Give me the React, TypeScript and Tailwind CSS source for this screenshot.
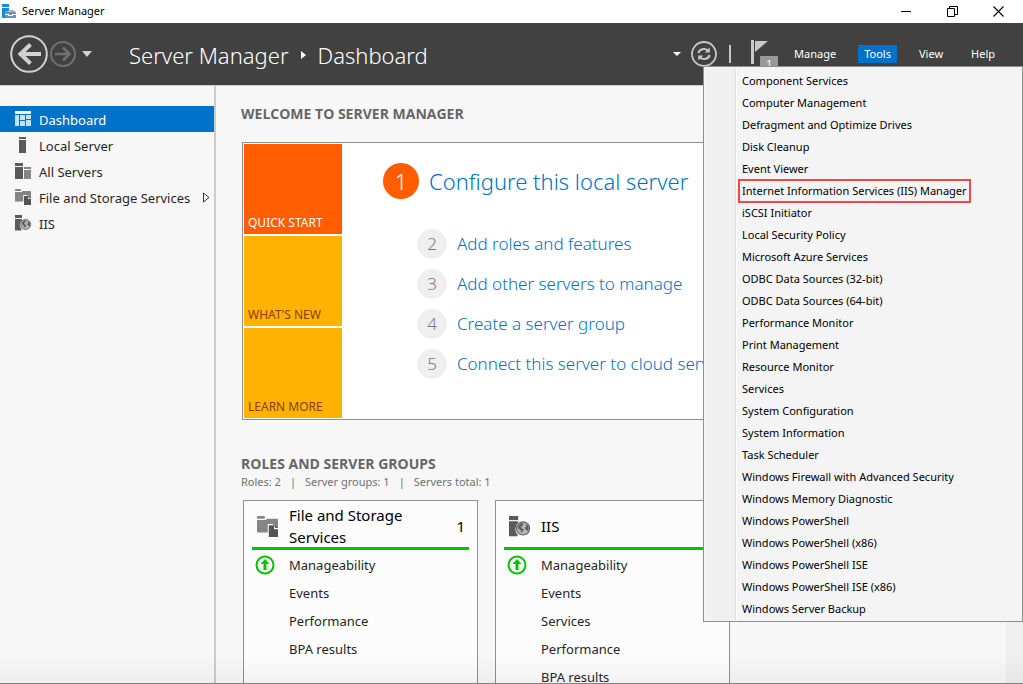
import { useState } from "react";
import type { ReactNode } from "react";

const toolItems = [
  "Component Services",
  "Computer Management",
  "Defragment and Optimize Drives",
  "Disk Cleanup",
  "Event Viewer",
  "Internet Information Services (IIS) Manager",
  "iSCSI Initiator",
  "Local Security Policy",
  "Microsoft Azure Services",
  "ODBC Data Sources (32-bit)",
  "ODBC Data Sources (64-bit)",
  "Performance Monitor",
  "Print Management",
  "Resource Monitor",
  "Services",
  "System Configuration",
  "System Information",
  "Task Scheduler",
  "Windows Firewall with Advanced Security",
  "Windows Memory Diagnostic",
  "Windows PowerShell",
  "Windows PowerShell (x86)",
  "Windows PowerShell ISE",
  "Windows PowerShell ISE (x86)",
  "Windows Server Backup",
];

const highlightedTool = "Internet Information Services (IIS) Manager";

const steps = [
  "Add roles and features",
  "Add other servers to manage",
  "Create a server group",
  "Connect this server to cloud services",
];

const AppIcon = () => (
  <svg width="16" height="16" viewBox="0 0 16 16" aria-hidden="true">
    <path d="M1 0h7v3H1zM1 4h7v2.500L4 8v6H1z" fill="#0f8be6" />
    <path d="M6 7.500 7 6h5l1 1.500h1l1 1V14H4V8.500l1-1z" fill="#6f8fb3" />
    <path d="M7 7.500 7.600 6.800h3.800l.6.7zM4 10h4v1h3v-1h4v1h-3v1H7v-1H4z" fill="#fff" />
  </svg>
);

const DashboardIcon = () => (
  <svg width="16" height="16" viewBox="0 0 16 16" aria-hidden="true">
    <path d="M0 0h16v3H0z" fill="#fff" />
    <path d="M0 4h4v11H0zM5 4h5v5H5zM5 10h5v5H5zM11 4h5v4h-5zM11 9h5v6h-5z" fill="#c8e2f5" />
  </svg>
);

const ServerIcon = () => (
  <svg width="16" height="16" viewBox="0 0 16 16" aria-hidden="true">
    <path d="M4 0h7v2H4zM4 3h7v13H4z" fill="#5a5a5a" />
  </svg>
);

const ServersIcon = () => (
  <svg width="16" height="16" viewBox="0 0 16 16" aria-hidden="true">
    <path d="M0 0h8v3H0zM0 4h8v12H0z" fill="#5a5a5a" />
    <path d="M9 4h7v2H9zM9 7h7v9H9z" fill="#858585" />
  </svg>
);

const FilesIcon = ({ size = 16 }: { size?: number }) => (
  <svg width={size} height={size} viewBox="0 0 16 16" aria-hidden="true">
    <path d="M0 .5.500 0h5L6 .5V2H0zM0 3h6.500L7.500 2h8l.5.500V9h-2l-2-3H8.200v6.500H0z" fill="#858585" />
    <path d="M9 7h4v3h3v6H9z" fill="#555" />
    <path d="M13.800 7 16 9.200h-2.200z" fill="#555" />
  </svg>
);

const IisIcon = ({ size = 16 }: { size?: number }) => (
  <svg width={size} height={size} viewBox="0 0 16 16" aria-hidden="true">
    <path d="M0 0h7v3H0zM0 4h7v1.200A6 6 0 0 0 6.500 14v1.500H0z" fill="#5a5a5a" />
    <circle cx="10.700" cy="9.500" r="5" fill="#b5b5b5" stroke="#606060" strokeWidth="0.900" />
    <path
      d="M7 7.500 9.500 5.300l1.600.4-.6 1.400L9 8.300l.8 1.200 1.400.6-.7 1.600-.9 1.300-.8-2.200L7 9.300zM12.500 6l2 1.400.6 2.200-1 2-1.300-1.300-.8-1.400 1.200-.7z"
      fill="#5e5e5e"
    />
  </svg>
);

const navItems: { label: string; icon: ReactNode; more?: boolean }[] = [
  { label: "Dashboard", icon: <DashboardIcon /> },
  { label: "Local Server", icon: <ServerIcon /> },
  { label: "All Servers", icon: <ServersIcon /> },
  { label: "File and Storage Services", icon: <FilesIcon />, more: true },
  { label: "IIS", icon: <IisIcon /> },
];

const TitleBar = () => (
  <div className="flex h-[23px] shrink-0 items-center bg-white pl-px pr-0.5 text-black">
    <AppIcon />
    <span className="ml-[5px] text-[11px]">Server Manager</span>
    <div className="ml-auto flex">
      <button type="button" aria-label="Minimize" className="flex h-5 w-[46px] items-center justify-center">
        <svg width="11" height="11" viewBox="0 0 11 11">
          <path d="M0 5.500h10" stroke="#000" />
        </svg>
      </button>
      <button type="button" aria-label="Restore" className="flex h-5 w-[46px] items-center justify-center">
        <svg width="11" height="11" viewBox="0 0 11 11" fill="none" stroke="#000">
          <path d="M.5 2.500h7v8h-7zM2.500 2.500v-2h8v8h-3" />
        </svg>
      </button>
      <button type="button" aria-label="Close" className="flex h-5 w-[46px] items-center justify-center">
        <svg width="11" height="11" viewBox="0 0 11 11">
          <path d="M.5.500l10 10M10.500.500l-10 10" stroke="#000" strokeWidth="1.100" />
        </svg>
      </button>
    </div>
  </div>
);

const ToolsMenu = () => (
  <div className="absolute top-[43px] right-0 z-10 flex w-80 border border-[#8f8f8f] bg-[#f4f4f4] px-0.5 pt-0.5 pb-px text-black">
    <div className="w-[30px] border-r border-[#e0e0e0] bg-[#f0f0f0]" />
    <ul className="flex-1 border-l border-white pt-px pl-[3px]">
      {toolItems.map((item) => (
        <li key={item} className="flex h-[22px] items-center">
          <button
            type="button"
            className={
              item === highlightedTool
                ? "h-5 px-0.5 text-[11px] whitespace-nowrap outline-2 outline-[#f04a43]"
                : "h-5 px-0.5 text-[11px] whitespace-nowrap"
            }
          >
            {item}
          </button>
        </li>
      ))}
    </ul>
  </div>
);

const Header = ({ menuOpen, onTools }: { menuOpen: boolean; onTools: () => void }) => (
  <header className="relative flex h-[63px] shrink-0 items-center border-b border-[#cfcfcf] bg-[#414141] pr-[22px] pl-2.5 text-white">
    <button type="button" aria-label="Back">
      <svg width="38" height="38" viewBox="0 0 38 38" fill="none" stroke="#d2d2d2">
        <circle cx="19" cy="19" r="17.800" strokeWidth="2" />
        <path d="M9.500 19H31" strokeWidth="4" />
        <path d="M20.500 9.500 10.500 19l10 9.500" strokeWidth="4" />
      </svg>
    </button>
    <button type="button" aria-label="Forward" className="ml-0.5">
      <svg width="26" height="26" viewBox="0 0 26 26" fill="none" stroke="#707070">
        <circle cx="13" cy="13" r="12" strokeWidth="2" />
        <path d="M5 13h14M13 6.500l6.500 6.500-6.500 6.500" strokeWidth="2.600" />
      </svg>
    </button>
    <button type="button" aria-label="History" className="ml-1.5">
      <svg width="10" height="6" viewBox="0 0 10 6">
        <path d="M0 0h10L5 6z" fill="#d2d2d2" />
      </svg>
    </button>
    <h1 className="ml-[37px] flex items-center pt-0.5 text-[22px] font-light whitespace-nowrap">
      Server Manager
      <svg className="mx-3" width="5" height="8" viewBox="0 0 5 8" aria-hidden="true">
        <path d="M0 0l5 4-5 4z" fill="#fff" />
      </svg>
      Dashboard
    </h1>
    <div className="ml-auto flex items-center">
      <svg width="8" height="4" viewBox="0 0 8 4" aria-hidden="true">
        <path d="M0 0h8L4 4z" fill="#fff" />
      </svg>
      <button type="button" aria-label="Refresh" className="ml-2.5">
        <svg width="26" height="26" viewBox="0 0 26 26" fill="none" stroke="#c8c8c8">
          <circle cx="13" cy="13" r="12" strokeWidth="1.800" />
          <path d="M7.500 12a5.500 4.500 0 0 1 9.500-2.500M18.500 14a5.500 4.500 0 0 1-9.500 2.500" strokeWidth="2.200" />
          <path d="M18.800 6.500v5h-5zM7.200 19.500v-5h5z" fill="#c8c8c8" stroke="none" />
        </svg>
      </button>
      <div className="ml-3 h-[18px] w-0.5 bg-[#c8c8c8]" />
      <button type="button" aria-label="Notifications" className="relative ml-5 h-7 w-7">
        <svg width="28" height="28" viewBox="0 0 28 28" aria-hidden="true">
          <path d="M0 0h3v24H0z" fill="#c8c8c8" />
          <path d="M4 1h13L4 12z" fill="#c8c8c8" />
        </svg>
        <span className="absolute top-4 left-[9px] h-4 w-[18px] bg-[#98989b] text-center text-[11px] leading-4">1</span>
      </button>
      <nav className="ml-[9px] flex items-center gap-4 text-[11px] leading-[18px]">
        <button type="button" className="px-1.5">Manage</button>
        <button
          type="button"
          aria-expanded={menuOpen}
          onClick={onTools}
          className={menuOpen ? "bg-[#0072ca] px-1.5" : "px-1.5"}
        >
          Tools
        </button>
        <button type="button" className="px-1.5">View</button>
        <button type="button" className="px-1.5">Help</button>
      </nav>
    </div>
    {menuOpen && <ToolsMenu />}
  </header>
);

const Sidebar = () => (
  <aside className="w-[216px] shrink-0 border-r-2 border-[#cbcbcb] pt-5">
    <ul>
      {navItems.map((item, i) => (
        <li key={item.label}>
          <a
            href="#"
            className={
              i === 0
                ? "flex h-[26px] items-center bg-[#0072ca] pl-[15px] text-[13px] text-white"
                : "flex h-[26px] items-center pl-[15px] text-[13px] text-[#262626]"
            }
          >
            {item.icon}
            <span className="ml-2 pt-1 whitespace-nowrap">{item.label}</span>
            {item.more && (
              <svg className="mr-1 ml-auto" width="8" height="11" viewBox="0 0 8 11" aria-hidden="true">
                <path d="M1.500 1l5.500 4.500L1.500 10z" fill="#fff" stroke="#333" />
              </svg>
            )}
          </a>
        </li>
      ))}
    </ul>
  </aside>
);

const WelcomePanel = () => (
  <section className="mt-4 ml-px flex border border-[#8f8f8f] bg-white p-px">
    <div className="flex w-[98px] shrink-0 flex-col gap-0.5 text-xs text-[#8a3c00]">
      <button type="button" className="flex h-[90px] items-end bg-[#ff5d00] px-1 pb-[3px] text-white">QUICK START</button>
      <button type="button" className="flex h-[90px] items-end bg-[#ffb300] px-1 pb-[3px]">WHAT'S NEW</button>
      <button type="button" className="flex h-[90px] items-end bg-[#ffb300] px-1 pb-[3px]">LEARN MORE</button>
    </div>
    <div className="pt-[19px] pl-[41px] font-light text-[#0072c6]">
      <a href="#" className="flex items-center gap-2.5 text-[22px] whitespace-nowrap">
        <span className="flex size-9 items-center justify-center rounded-full bg-[#ff5d00] text-white">1</span>
        Configure this local server
      </a>
      <ol className="mt-[26px] ml-[34px]">
        {steps.map((step, i) => (
          <li key={step} className="h-10 pt-1">
            <a href="#" className="flex items-center gap-2.5 text-[17px] whitespace-nowrap">
              <span className="flex size-[30px] items-center justify-center rounded-full bg-[#efefef] text-[#777]">{i + 2}</span>
              {step}
            </a>
          </li>
        ))}
      </ol>
    </div>
  </section>
);

const RoleCard = ({ icon, title, rows }: { icon: ReactNode; title: string; rows: string[] }) => (
  <article className="h-60 w-[235px] shrink-0 border border-[#8f8f8f] bg-[#fcfcfc] px-2 pt-1">
    <div className="flex h-[45px] items-center border-b-3 border-[#00c400] pr-1 pl-[5px] text-black">
      {icon}
      <h3 className="ml-[11px] w-32 text-[15px] leading-[22px]">{title}</h3>
      <span className="ml-auto text-[15px]">1</span>
    </div>
    <ul className="pt-px text-[13px] text-[#262626]">
      {rows.map((row, i) => (
        <li key={row} className="flex h-7 items-center pl-[3px]">
          {i === 0 && (
            <svg width="20" height="20" viewBox="0 0 20 20" aria-hidden="true">
              <circle cx="10" cy="10" r="8.500" fill="none" stroke="#00c400" strokeWidth="2" />
              <path d="M10 4l4.500 5h-3v6h-3V9h-3z" fill="#00c400" />
            </svg>
          )}
          <a href="#" className={i === 0 ? "ml-3.5 pt-0.5" : "ml-[34px] pt-0.5"}>{row}</a>
        </li>
      ))}
    </ul>
  </article>
);

const App = () => {
  const [menuOpen, setMenuOpen] = useState(true);

  return (
    <div className="flex h-screen flex-col overflow-hidden border-b border-[#808080] bg-[#f7f7f7] font-['Noto_Sans','Open_Sans',sans-serif]">
      <TitleBar />
      <Header menuOpen={menuOpen} onTools={() => setMenuOpen(!menuOpen)} />
      <div className="relative flex min-h-0 flex-1">
        <Sidebar />
        <main className="min-w-0 flex-1 overflow-hidden pt-[18px] pr-6 pl-[25px]">
          <h2 className="font-['Open_Sans'] text-sm leading-5 font-bold text-[#666]">WELCOME TO SERVER MANAGER</h2>
          {/* Quick start tiles and setup steps */}
          <div className="pt-0.5">
            <WelcomePanel />
          </div>

          {/* Roles */}
          <h2 className="mt-[34px] font-['Open_Sans'] text-sm leading-5 font-bold text-[#666]">ROLES AND SERVER GROUPS</h2>
          <p className="flex gap-[9px] text-[11px] leading-4 text-[#707070]">
            <span>Roles: 2</span>
            <span>|</span>
            <span>Server groups: 1</span>
            <span>|</span>
            <span>Servers total: 1</span>
          </p>
          <div className="mt-2.5 ml-0.5 flex gap-[17px]">
            <RoleCard
              icon={<FilesIcon size={21} />}
              title="File and Storage Services"
              rows={["Manageability", "Events", "Performance", "BPA results"]}
            />
            <RoleCard
              icon={<IisIcon size={21} />}
              title="IIS"
              rows={["Manageability", "Events", "Services", "Performance", "BPA results"]}
            />
          </div>
        </main>
        <div className="w-[17px] shrink-0 bg-[#efefef]" />
        <div className="pointer-events-none absolute inset-x-0 bottom-0 h-7 bg-linear-to-b from-transparent to-black/4" />
      </div>
    </div>
  );
};

export default App;
